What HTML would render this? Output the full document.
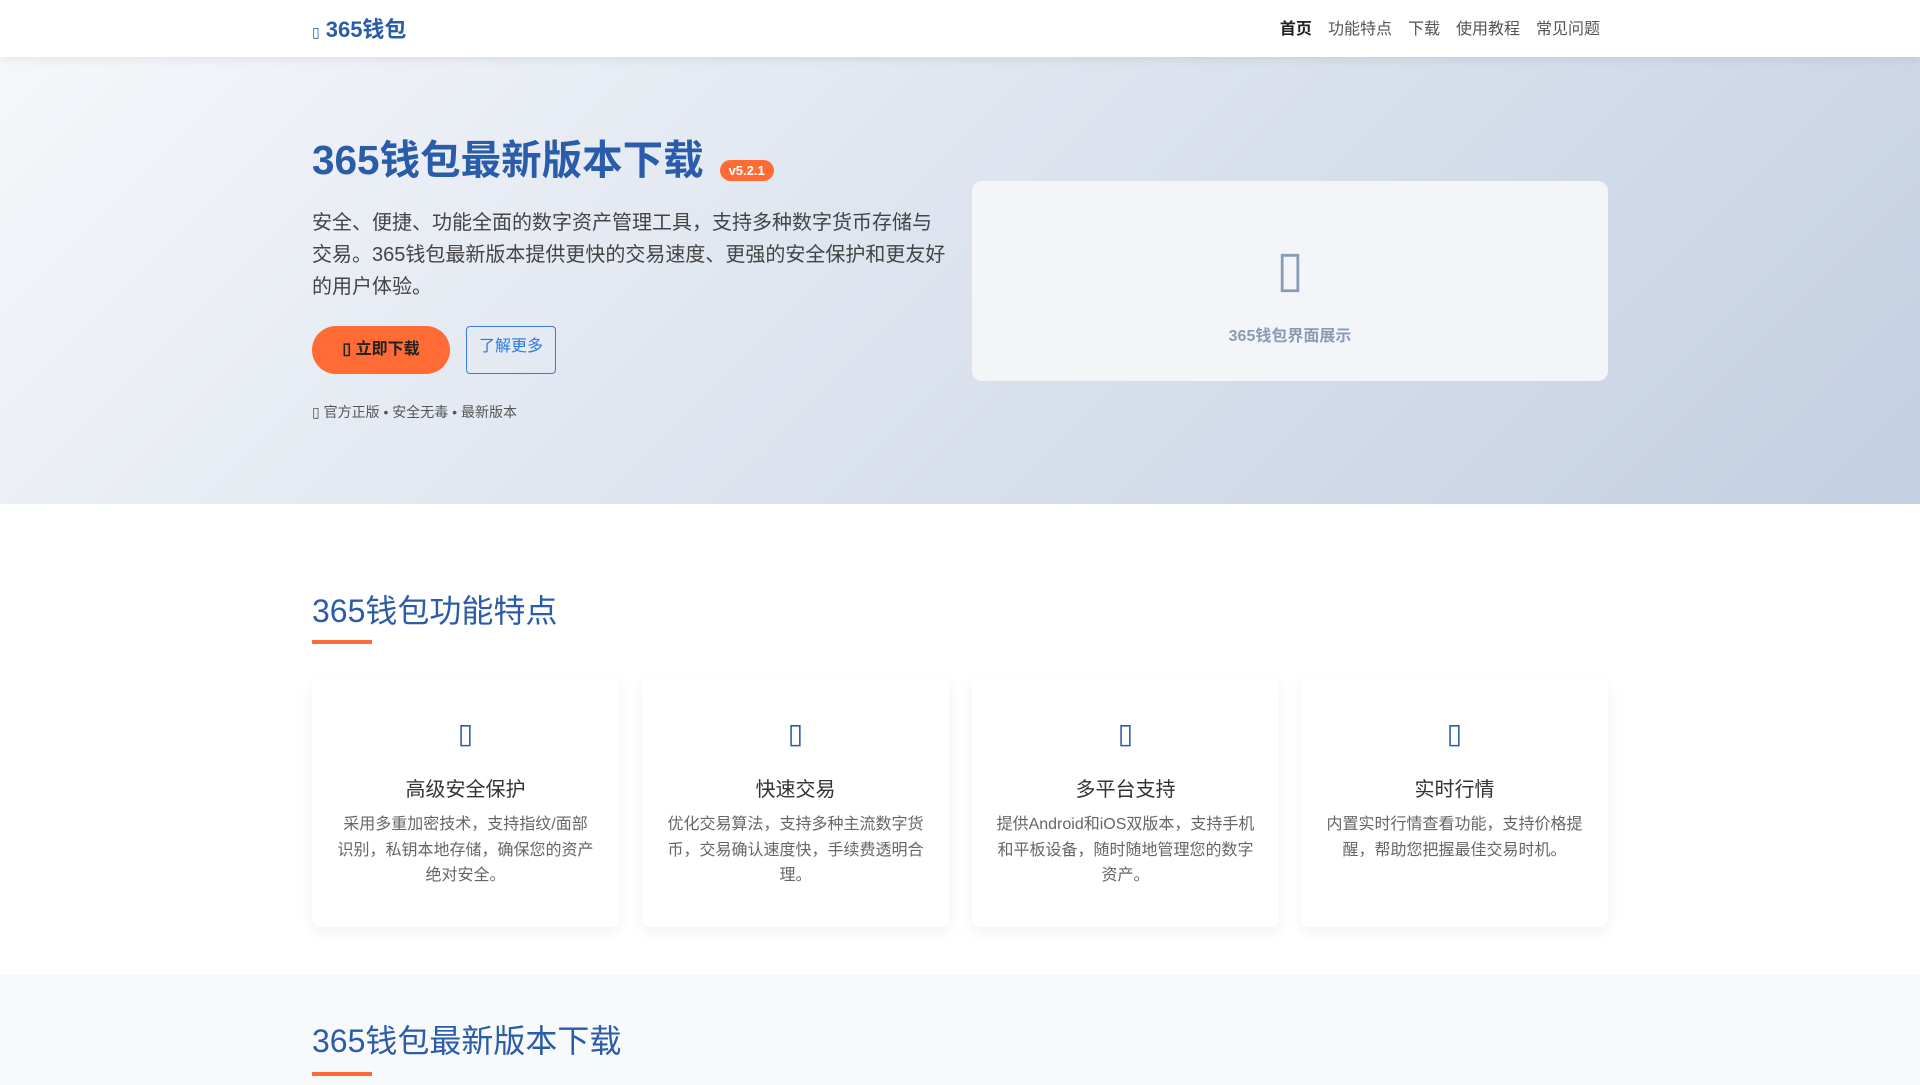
<!DOCTYPE html>
<html><head><meta charset="utf-8"><style>
*{margin:0;padding:0;box-sizing:border-box}
body{width:1920px;height:1080px;overflow:hidden;font-family:"Liberation Sans","Noto Sans CJK SC",sans-serif;background:#fff;color:#333}
.c{width:1296px;margin:0 auto;position:relative}
header{height:57px;background:#fff;box-shadow:0 2px 10px rgba(0,0,0,.08);position:relative;z-index:2}
.logo{position:absolute;left:0;top:12px;font-size:22px;font-weight:bold;color:#2a5caa}
.logo i{font-style:normal;font-size:14px;font-weight:normal;margin-right:6px}
nav{position:absolute;right:8px;top:15px;font-size:16px;color:#555}
nav a{margin-left:16px}
nav a:first-child{color:#222;font-weight:bold}
.hero{height:447px;background:linear-gradient(135deg,#f5f7fa 0%,#c3cfe2 100%)}
.hero h1{position:absolute;left:0;top:70px;font-size:40.5px;color:#2a5caa;font-weight:bold;white-space:nowrap}
.badge{display:inline-block;background:#ff6b35;color:#fff;font-size:13px;padding:3px 9px;border-radius:12px;vertical-align:middle;margin-left:16px;position:relative;top:7px}
.hero p{position:absolute;left:0;top:150px;width:637px;font-size:20px;line-height:32px;color:#444}
.b1{position:absolute;left:0;top:269px;width:138px;height:48px;border-radius:24px;background:#ff6b35;color:#222;font-weight:bold;font-size:16px;text-align:center;line-height:48px}
.b2{position:absolute;left:154px;top:269px;width:90px;height:48px;border:1px solid #3a7bd5;border-radius:4px;color:#2a7ae2;font-size:16px;text-align:center;padding-top:5px}
.note{position:absolute;left:0;top:345px;font-size:14px;color:#555}
.shot{position:absolute;left:660px;top:124px;width:636px;height:200px;background:#f3f5f9;border-radius:10px;text-align:center;color:#8a9bb5}
.shot .ic{font-size:50px;margin-top:59px;display:block;height:60px}
.shot .t{font-size:16px;font-weight:bold;margin-top:22px;display:block}
h2{font-size:32px;font-weight:normal;color:#2a5caa;position:absolute;left:0}
.ul{position:absolute;left:0;width:60px;height:4px;background:#ff6b35}
.feat{height:471px;position:relative}
.card{position:absolute;top:173px;width:307px;height:250px;background:#fff;border-radius:8px;box-shadow:0 5px 15px rgba(0,0,0,.06);text-align:center}
.card .ic{color:#2a5caa;font-size:28px;margin-top:40px;height:36px}
.card h3{font-size:20px;font-weight:normal;color:#333;margin-top:20px}
.card p{font-size:16px;line-height:25.6px;color:#666;padding:0 24px;margin-top:10px}
.dl{background:#f8f9fb;height:110px}
</style></head><body>
<header><div class="c"><div class="logo"><i>▯</i>365钱包</div>
<nav><a>首页</a><a>功能特点</a><a>下载</a><a>使用教程</a><a>常见问题</a></nav></div></header>
<div class="hero"><div class="c">
<h1>365钱包最新版本下载<span class="badge">v5.2.1</span></h1>
<p>安全、便捷、功能全面的数字资产管理工具，支持多种数字货币存储与交易。365钱包最新版本提供更快的交易速度、更强的安全保护和更友好的用户体验。</p>
<div class="b1">▯ 立即下载</div><div class="b2">了解更多</div>
<div class="note">▯ 官方正版 • 安全无毒 • 最新版本</div>
<div class="shot"><span class="ic">▯</span><span class="t">365钱包界面展示</span></div>
</div></div>
<div class="feat"><div class="c">
<h2 style="top:82px">365钱包功能特点</h2><div class="ul" style="top:136px"></div>
<div class="card" style="left:0"><div class="ic">▯</div><h3>高级安全保护</h3><p>采用多重加密技术，支持指纹/面部识别，私钥本地存储，确保您的资产绝对安全。</p></div>
<div class="card" style="left:330px"><div class="ic">▯</div><h3>快速交易</h3><p>优化交易算法，支持多种主流数字货币，交易确认速度快，手续费透明合理。</p></div>
<div class="card" style="left:660px"><div class="ic">▯</div><h3>多平台支持</h3><p>提供Android和iOS双版本，支持手机和平板设备，随时随地管理您的数字资产。</p></div>
<div class="card" style="left:989px"><div class="ic">▯</div><h3>实时行情</h3><p>内置实时行情查看功能，支持价格提醒，帮助您把握最佳交易时机。</p></div>
</div></div>
<div class="dl"><div class="c">
<h2 style="top:41px">365钱包最新版本下载</h2><div class="ul" style="top:97px"></div>
</div></div>
</body></html>
